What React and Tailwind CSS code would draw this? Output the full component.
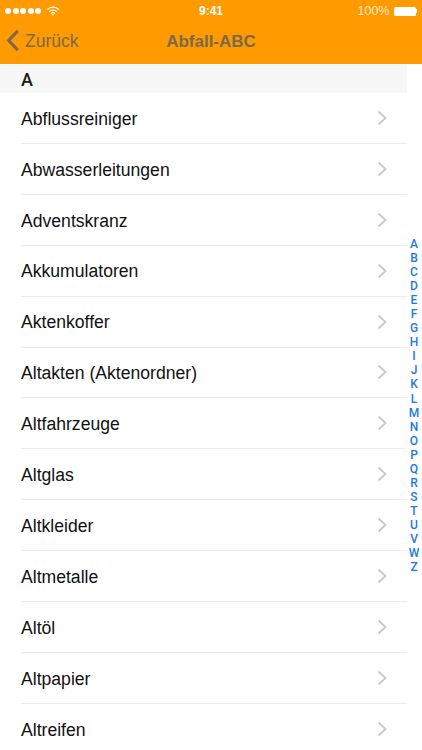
const ITEMS = [
  "Abflussreiniger",
  "Abwasserleitungen",
  "Adventskranz",
  "Akkumulatoren",
  "Aktenkoffer",
  "Altakten (Aktenordner)",
  "Altfahrzeuge",
  "Altglas",
  "Altkleider",
  "Altmetalle",
  "Altöl",
  "Altpapier",
  "Altreifen",
];

const LETTERS = "ABCDEFGHIJKLMNOPQRSTUVWZ".split("");

const WifiIcon = () => (
  <svg viewBox="0 0 16 12" className="w-[14px] h-[10px] ml-[3px]" fill="none" stroke="#fff" strokeWidth="1.5" strokeLinecap="butt">
    <path d="M1 4.2a10 10 0 0 1 14 0" />
    <path d="M3.4 6.7a6.6 6.6 0 0 1 9.2 0" />
    <path d="M5.7 9a3.3 3.3 0 0 1 4.6 0" />
    <path d="M8 11.8 6.6 10.2a2 2 0 0 1 2.8 0z" fill="#fff" stroke="none" />
  </svg>
);

const Chevron = () => (
  <svg viewBox="0 0 10 16" className="w-[10px] h-[16px]" fill="none" stroke="#c7c7cc" strokeWidth="1.8">
    <path d="M1.5 1.5 8.5 8l-7 6.5" />
  </svg>
);

const BackChevron = () => (
  <svg viewBox="0 0 14 24" className="w-[14px] h-[23px]" fill="none" stroke="#7a6a4a" strokeWidth="3.2">
    <path d="M12 2 2.5 12 12 22" />
  </svg>
);

export default function App() {
  return (
    <div className="relative w-[422px] h-[750px] overflow-hidden bg-white font-['Liberation_Sans',sans-serif]">
      {/* header */}
      <div className="h-[64px] bg-[#ff9a00] flex flex-col">
        <div className="h-[21px] pt-[1px] px-[5px] flex items-center justify-between text-white text-[12.5px]">
          <div className="flex-1 flex items-center gap-[1.5px]">
            <span className="w-[6px] h-[6px] rounded-full bg-white" />
            <span className="w-[6px] h-[6px] rounded-full bg-white" />
            <span className="w-[6px] h-[6px] rounded-full bg-white" />
            <span className="w-[6px] h-[6px] rounded-full bg-white" />
            <span className="w-[6px] h-[6px] rounded-full bg-white" />
            <WifiIcon />
          </div>
          <span className="font-bold text-[12px]">9:41</span>
          <div className="flex-1 flex items-center justify-end gap-[4px]">
            <span className="text-[#ffe9c4]">100%</span>
            <div className="flex items-center">
              <div className="w-[22px] h-[9px] bg-white rounded-[1.5px]" />
              <div className="w-[1.5px] h-[4px] bg-white" />
            </div>
          </div>
        </div>
        <div className="relative flex-1 flex items-center justify-center">
          <div className="absolute left-[6px] top-[6px] flex items-center gap-[5px] text-[#7a6a4a] text-[17.5px]">
            <BackChevron />
            <span className="pt-[1px]">Zurück</span>
          </div>
          <span className="font-bold text-[#7a6a4a] text-[17px] -mt-[2px]">Abfall-ABC</span>
        </div>
      </div>

      {/* section header */}
      <div className="w-[407px] h-[28px] mt-[1px] pl-[21px] pt-[1px] bg-[#f7f7f7] flex items-center font-['Roboto',sans-serif] text-[18px] text-[#1a1a1a] font-medium">
        A
      </div>

      {/* list */}
      <div className="w-[407px]">
        {ITEMS.map((item) => (
          <div key={item} className="h-[50.92px] ml-[21px] flex items-center justify-between pr-[20px] border-b border-[#ececec]">
            <span className="text-[17.6px] text-[#111] pt-[2px]">{item}</span>
            <Chevron />
          </div>
        ))}
      </div>

      {/* index */}
      <div className="absolute right-0 top-[237px] w-[16px] flex flex-col items-center font-['Roboto',sans-serif] font-medium text-[#1a7ae8] text-[12px] leading-[14.04px]">
        {LETTERS.map((l) => (
          <span key={l}>{l}</span>
        ))}
      </div>
    </div>
  );
}
